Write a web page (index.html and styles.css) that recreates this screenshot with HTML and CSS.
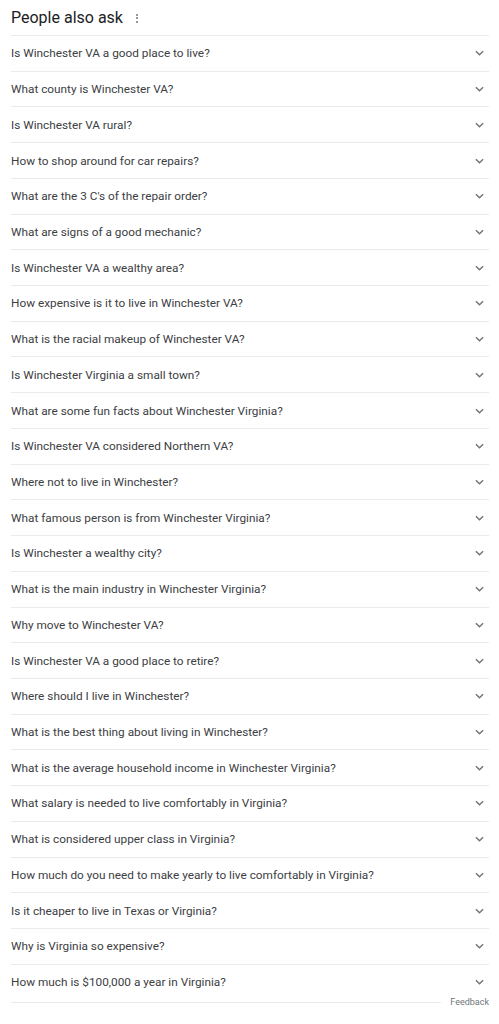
FILE: index.html
```html
<!DOCTYPE html>
<html lang="en">
<head>
    <meta charset="UTF-8">
    <meta name="viewport" content="width=device-width, initial-scale=1.0">
    <title>People also ask</title>
    <link rel="stylesheet" href="styles.css">
</head>
<body>
    <div class="paa">
        <div class="paa-header">
            <h2>People also ask</h2>
            <span class="kebab"><i></i><i></i><i></i></span>
        </div>

        <ul class="questions" id="questions"></ul>

        <div class="paa-footer">
            <span class="rule"></span>
            <a href="#" class="feedback">Feedback</a>
        </div>
    </div>

    <script>
        const questions = [
            'Is Winchester VA a good place to live?',
            'What county is Winchester VA?',
            'Is Winchester VA rural?',
            'How to shop around for car repairs?',
            "What are the 3 C's of the repair order?",
            'What are signs of a good mechanic?',
            'Is Winchester VA a wealthy area?',
            'How expensive is it to live in Winchester VA?',
            'What is the racial makeup of Winchester VA?',
            'Is Winchester Virginia a small town?',
            'What are some fun facts about Winchester Virginia?',
            'Is Winchester VA considered Northern VA?',
            'Where not to live in Winchester?',
            'What famous person is from Winchester Virginia?',
            'Is Winchester a wealthy city?',
            'What is the main industry in Winchester Virginia?',
            'Why move to Winchester VA?',
            'Is Winchester VA a good place to retire?',
            'Where should I live in Winchester?',
            'What is the best thing about living in Winchester?',
            'What is the average household income in Winchester Virginia?',
            'What salary is needed to live comfortably in Virginia?',
            'What is considered upper class in Virginia?',
            'How much do you need to make yearly to live comfortably in Virginia?',
            'Is it cheaper to live in Texas or Virginia?',
            'Why is Virginia so expensive?',
            'How much is $100,000 a year in Virginia?'
        ];

        const list = document.getElementById('questions');
        const chevron = '<svg viewBox="0 0 10 6" width="9" height="6"><path d="M1 1l4 4 4-4" fill="none" stroke="#70757a" stroke-width="1.6"/></svg>';

        // One row per question, with the expand chevron on the right
        questions.forEach(q => {
            const li = document.createElement('li');
            li.className = 'question';
            const text = document.createElement('span');
            text.textContent = q;
            li.appendChild(text);
            li.insertAdjacentHTML('beforeend', chevron);
            list.appendChild(li);
        });
    </script>
</body>
</html>
```

FILE: styles.css
```css
body {
    margin: 0;
    background: #ffffff;
    font-family: Roboto, Arial, sans-serif;
    color: #202124;
}
.paa {
    padding: 0 10px 0 11px;
}
.paa-header {
    display: flex;
    align-items: center;
    height: 35px;
}
.paa-header h2 {
    margin: 0;
    font-size: 16px;
    font-weight: 400;
    color: #202124;
}
.kebab {
    display: flex;
    flex-direction: column;
    gap: 1.5px;
    margin-left: 13px;
    margin-top: 1px;
}
.kebab i {
    display: block;
    width: 2px;
    height: 2px;
    border-radius: 50%;
    background: #70757a;
}
.questions {
    list-style: none;
    margin: 0;
    padding: 0;
}
.question {
    display: flex;
    align-items: center;
    justify-content: space-between;
    height: 34.73px;
    border-top: 1px solid #ebebeb;
    font-size: 11.8px;
    color: #3c4043;
}
.question svg {
    margin-right: 5px;
}
.paa-footer {
    display: flex;
    align-items: center;
    gap: 9px;
    height: 7px;
}
.rule {
    flex: 1;
    height: 1px;
    background: #ebebeb;
}
.feedback {
    font-size: 9px;
    line-height: 7px;
    color: #70757a;
    text-decoration: none;
}
```
